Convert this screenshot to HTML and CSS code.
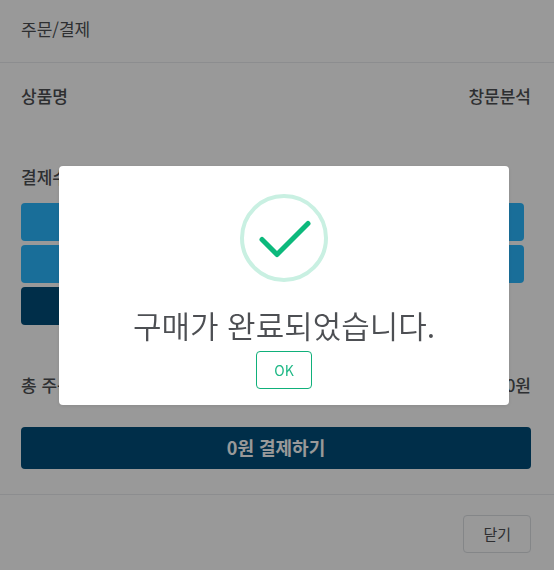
FILE: index.html
```html
<!DOCTYPE html>
<html lang="ko">
<head>
<meta charset="utf-8">
<meta name="viewport" content="width=device-width, initial-scale=1">
<title>주문/결제</title>
<link rel="stylesheet" href="styles.css">
</head>
<body>
<main class="checkout">
  <header class="checkout-header">
    <h1 class="checkout-title">주문/결제</h1>
  </header>
  <section class="checkout-body">
    <div class="row product-row">
      <span>상품명</span>
      <span>창문분석</span>
    </div>
    <h2 class="method-title">결제수단</h2>
    <div class="methods">
      <button class="method" type="button"></button>
      <button class="method" type="button"></button>
      <button class="method method-selected" type="button"></button>
    </div>
    <div class="row total-row">
      <span>총 주문금액</span>
      <span>0원</span>
    </div>
    <button class="pay" type="button">0원 결제하기</button>
  </section>
  <footer class="checkout-footer">
    <button class="close" type="button">닫기</button>
  </footer>
</main>
<div class="overlay">
  <div class="dialog" role="dialog" aria-modal="true" aria-labelledby="dialog-title">
    <svg class="success" viewBox="0 0 88 88" aria-hidden="true">
      <circle cx="44" cy="44" r="42" fill="none" stroke="#c9f0e2" stroke-width="4"/>
      <path d="M22 45.500L37 60.500L68 29.500" fill="none" stroke="#0cb97c" stroke-width="5" stroke-linecap="round" stroke-linejoin="round"/>
    </svg>
    <h2 class="dialog-title" id="dialog-title">구매가 완료되었습니다.</h2>
    <button class="ok" type="button">OK</button>
  </div>
</div>
</body>
</html>
```

FILE: styles.css
```css
* {
  box-sizing: border-box;
}

body {
  margin: 0;
  background: #fff;
  color: #4d4f53;
  font-family: "Noto Sans CJK KR", sans-serif;
  font-size: 17px;
  line-height: 24px;
}

h1,
h2 {
  margin: 0;
}

button {
  font-family: inherit;
  cursor: pointer;
}

.checkout-header {
  padding: 17px 21px 21px;
  border-bottom: 1px solid #e9ebee;
}

.checkout-title {
  font-size: 17px;
  font-weight: 400;
}

.checkout-body {
  padding: 21px 23px 25px 21px;
  border-bottom: 1px solid #e9ebee;
}

.row {
  display: flex;
  justify-content: space-between;
  font-weight: 500;
}

.product-row {
  margin-bottom: 57px;
}

.method-title {
  margin-bottom: 14px;
  font-size: 17px;
  font-weight: 500;
}

.methods {
  display: flex;
  flex-direction: column;
  gap: 4px;
  margin-right: 7px;
}

.method {
  height: 38px;
  border: 0;
  border-radius: 4px;
  background: #2bb8ff;
}

.method-selected {
  width: 50%;
  background: #004e7a;
}

.total-row {
  margin: 48px 0 30px;
}

.pay {
  width: 100%;
  height: 42px;
  padding: 0 0 2px;
  border: 0;
  border-radius: 4px;
  background: #004e7a;
  color: #fff;
  font-size: 18px;
  font-weight: 700;
}

.checkout-footer {
  display: flex;
  justify-content: flex-end;
  padding: 20px 23px 17px;
}

.close {
  height: 38px;
  padding: 0 19px 2px;
  border: 1px solid #dcdfe3;
  border-radius: 4px;
  background: #fff;
  color: #4d4f53;
  font-size: 15px;
}

.overlay {
  position: fixed;
  inset: 0;
  display: flex;
  align-items: center;
  justify-content: center;
  padding-left: 14px;
  background: rgba(0, 0, 0, 0.4);
}

.dialog {
  display: flex;
  flex-direction: column;
  align-items: center;
  width: 450px;
  max-width: 90%;
  padding: 28px 16px 16px;
  border-radius: 4px;
  background: #fff;
  box-shadow: 0 1px 4px rgba(0, 0, 0, 0.1);
}

.success {
  width: 88px;
  height: 88px;
  margin-bottom: 19px;
}

.dialog-title {
  margin-bottom: 2px;
  font-size: 31px;
  font-weight: 350;
  line-height: 48px;
}

.ok {
  height: 38px;
  padding: 0 17px;
  border: 1px solid #0fb07a;
  border-radius: 4px;
  background: #fff;
  color: #1fb886;
  font-size: 14px;
}
```
